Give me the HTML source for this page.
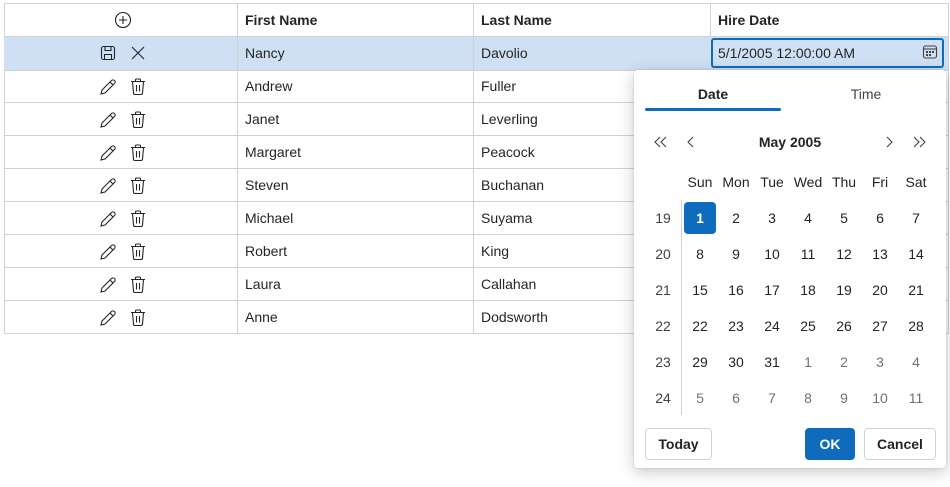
<!DOCTYPE html><html><head><style>
body{margin:0;width:950px;height:487px;background:#fff;font-family:"Liberation Sans",sans-serif;font-size:14px;color:#242424;position:relative;overflow:hidden}
.r{position:absolute;left:4px;width:944px;height:33px;border-bottom:1px solid #d1d1d1}
.c{position:absolute;top:0;height:33px;line-height:33px}
.v{position:absolute;top:3px;width:1px;height:330px;background:#d1d1d1}
svg{position:absolute}
.p{position:absolute;left:634px;top:70px;width:312px;height:398px;background:#fff;border-radius:4px;box-shadow:0 4px 16px rgba(0,0,0,.22),0 0 2px rgba(0,0,0,.15)}
.d{position:absolute;width:36px;text-align:center;transform:translateX(-50%);line-height:20px}
.gr{color:#707070}
.b{position:absolute;top:358px;height:30px;border:1px solid #d1d1d1;border-radius:4px;font-weight:bold;text-align:center;line-height:30px;background:#fff}
</style></head><body>
<div style="position:absolute;left:4px;top:3px;width:943px;height:329px;border:1px solid #d1d1d1;box-sizing:content-box"></div>
<div class="r" style="top:36px;height:33px;background:#cfe0f4;border-top:1px solid #d1d1d1"></div>
<div class="v" style="left:237px"></div><div class="v" style="left:473px"></div><div class="v" style="left:710px;height:33px"></div>
<div class="v" style="left:710px;top:70px;height:263px"></div>
<div class="c" style="left:245px;top:4px;font-weight:bold">First Name</div>
<div class="c" style="left:481px;top:4px;font-weight:bold">Last Name</div>
<div class="c" style="left:718px;top:4px;font-weight:bold">Hire Date</div>
<svg style="left:114px;top:11px" width="18" height="18" viewBox="0 0 18 18" fill="none" stroke="#242424" stroke-width="1.1"><circle cx="9" cy="9" r="7.5"/><path d="M9 5v8M5 9h8"/></svg>
<svg style="left:100px;top:45px" width="16" height="16" viewBox="0 0 16 16" fill="none" stroke="#242424" stroke-width="1.1"><rect x="1.5" y="1.5" width="13" height="13" rx="2"/><path d="M5 1.5v4h6v-4M4.5 14.5v-5h7v5"/></svg>
<svg style="left:131px;top:46px" width="14" height="14" viewBox="0 0 14 14" stroke="#242424" stroke-width="1.1"><path d="M1 1l12 12M13 1L1 13"/></svg>
<div class="c" style="left:245px;top:37px">Nancy</div><div class="c" style="left:481px;top:37px">Davolio</div>
<div style="position:absolute;left:711px;top:38px;height:26px;border:2px solid #0f6cbd;border-radius:3px;line-height:26px;padding-left:5px;box-sizing:content-box;width:224px">5/1/2005 12:00:00 AM</div>
<svg style="left:922px;top:44px" width="16" height="16" viewBox="0 0 16 16" fill="none" stroke="#424242" stroke-width="1.1"><rect x="1.5" y="2" width="13" height="12" rx="2"/><path d="M1.5 5h13"/><g fill="#424242" stroke="none"><rect x="4" y="7" width="2" height="2"/><rect x="7" y="7" width="2" height="2"/><rect x="10" y="7" width="2" height="2"/><rect x="4" y="10" width="2" height="2"/><rect x="7" y="10" width="2" height="2"/></g></svg>
<div id="rows"></div>
<script>
var d=[["Andrew","Fuller"],["Janet","Leverling"],["Margaret","Peacock"],["Steven","Buchanan"],["Michael","Suyama"],["Robert","King"],["Laura","Callahan"],["Anne","Dodsworth"]],h="";
d.forEach(function(x,i){var t=69+i*33;h+='<div class="r" style="top:'+t+'px"></div><div class="c" style="left:245px;top:'+(t+1)+'px">'+x[0]+'</div><div class="c" style="left:481px;top:'+(t+1)+'px">'+x[1]+'</div>'+
'<svg style="left:99px;top:'+(t+9)+'px" width="18" height="18" viewBox="0 0 18 18" fill="none" stroke="#242424" stroke-width="1.1"><path d="M2 16l1-4L12.5 2.5a2 2 0 0 1 3 3L6 15z M11 4l3 3"/></svg>'+
'<svg style="left:130px;top:'+(t+9)+'px" width="16" height="17" viewBox="0 0 16 17" fill="none" stroke="#242424" stroke-width="1.1"><path d="M1 3.5h14M5.5 3.5V2a1 1 0 0 1 1-1h3a1 1 0 0 1 1 1v1.5M2.5 3.5l1 11.5a1.5 1.5 0 0 0 1.5 1.5h6a1.5 1.5 0 0 0 1.5-1.5l1-11.5M6.5 7v6.5M9.5 7v6.5"/></svg>';});
document.getElementById('rows').innerHTML=h;
</script>
<div class="p">
<div style="position:absolute;left:79px;top:16px;transform:translateX(-50%);font-weight:bold">Date</div>
<div style="position:absolute;left:232px;top:16px;transform:translateX(-50%);color:#424242">Time</div>
<div style="position:absolute;left:11px;top:38px;width:136px;height:3px;background:#0f6cbd;border-radius:2px"></div>
<div style="position:absolute;left:156px;top:64px;transform:translateX(-50%);font-weight:bold">May 2005</div>
<svg style="left:20px;top:66px" width="14" height="12" viewBox="0 0 14 12" fill="none" stroke="#424242" stroke-width="1.1"><path d="M6 1L1 6l5 5M12 1L7 6l5 5"/></svg>
<svg style="left:53px;top:66px" width="8" height="12" viewBox="0 0 8 12" fill="none" stroke="#424242" stroke-width="1.1"><path d="M6 1L1 6l5 5"/></svg>
<svg style="left:251px;top:66px" width="8" height="12" viewBox="0 0 8 12" fill="none" stroke="#424242" stroke-width="1.1"><path d="M2 1l5 5-5 5"/></svg>
<svg style="left:278px;top:66px" width="14" height="12" viewBox="0 0 14 12" fill="none" stroke="#424242" stroke-width="1.1"><path d="M2 1l5 5-5 5M8 1l5 5-5 5"/></svg>
<div style="position:absolute;left:47px;top:130px;width:1px;height:215px;background:#d1d1d1"></div>
<div style="position:absolute;left:50px;top:132px;width:32px;height:32px;background:#0f6cbd;border-radius:4px"></div>
<div id="cal"></div>
<div class="b" style="left:11px;width:65px">Today</div>
<div class="b" style="left:171px;width:48px;background:#0f6cbd;border-color:#0f6cbd;color:#fff">OK</div>
<div class="b" style="left:230px;width:70px">Cancel</div>
</div>
<script>
var c="",xs=[29,66,102,138,174,210,246,282],dn=["Sun","Mon","Tue","Wed","Thu","Fri","Sat"];
dn.forEach(function(n,i){c+='<div class="d" style="left:'+xs[i+1]+'px;top:102px">'+n+'</div>';});
var day=1,nx=1;
for(var w=0;w<6;w++){var y=138+w*36;c+='<div class="d" style="left:29px;top:'+y+'px;color:#424242">'+(19+w)+'</div>';
for(var k=0;k<7;k++){var t,cl="";if(day<=31){t=day++;}else{t=nx++;cl="gr";}
var st=(t==1&&w==0)?"color:#fff;font-weight:bold;":"";
c+='<div class="d '+cl+'" style="left:'+xs[k+1]+'px;top:'+y+'px;'+st+'">'+t+'</div>';}}
document.getElementById('cal').innerHTML=c;
</script>
</body></html>
